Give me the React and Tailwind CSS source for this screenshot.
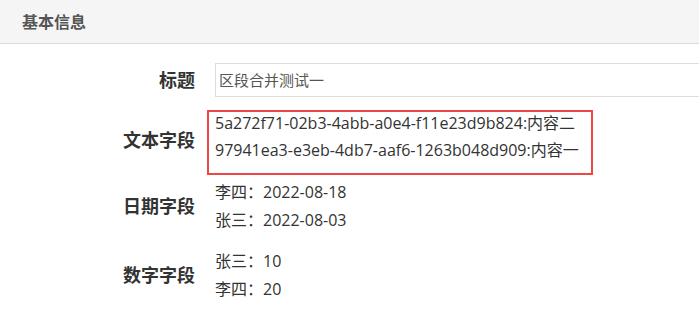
export default function App() {
  return (
    <div className="w-[699px] h-[326px] bg-white overflow-hidden font-['Open_Sans','Noto_Sans_CJK_SC',sans-serif]">
      <div className="h-[44px] bg-[#f5f5f5] border-b border-[#dcdcdc] flex items-center px-[22px]">
        <span className="text-[16px] font-bold text-[#555]">基本信息</span>
      </div>
      <div className="flex items-center mt-[19px]">
        <div className="w-[195px] shrink-0 text-right text-[18px] font-bold text-[#333] leading-none">标题</div>
        <div className="ml-[20px] h-[34px] w-[520px] shrink-0 border border-[#ddd] flex items-center pl-[3px] text-[15px] text-[#555]">
          区段合并测试一
        </div>
      </div>
      <div className="flex items-center mt-[13px]">
        <div className="w-[195px] shrink-0 text-right text-[18px] font-bold text-[#333] leading-none -mt-[6px]">文本字段</div>
        <div className="ml-[12px] w-[386px] shrink-0 h-[65px] border-2 border-[#f04545] pl-[6px] text-[16px] leading-[27px] text-[#333]">
          <div className="-mt-[2px]">
            <div>5a272f71-02b3-4abb-a0e4-f11e23d9b824:内容二</div>
            <div>97941ea3-e3eb-4db7-aaf6-1263b048d909:内容一</div>
          </div>
        </div>
      </div>
      <div className="flex items-center mt-[3px]">
        <div className="w-[195px] shrink-0 text-right text-[18px] font-bold text-[#333] leading-none">日期字段</div>
        <div className="ml-[20px] text-[16px] leading-[28px] text-[#333]">
          <div>李四：2022-08-18</div>
          <div>张三：2022-08-03</div>
        </div>
      </div>
      <div className="flex items-center mt-[13px]">
        <div className="w-[195px] shrink-0 text-right text-[18px] font-bold text-[#333] leading-none">数字字段</div>
        <div className="ml-[20px] text-[16px] leading-[28px] text-[#333]">
          <div>张三：10</div>
          <div>李四：20</div>
        </div>
      </div>
    </div>
  );
}
